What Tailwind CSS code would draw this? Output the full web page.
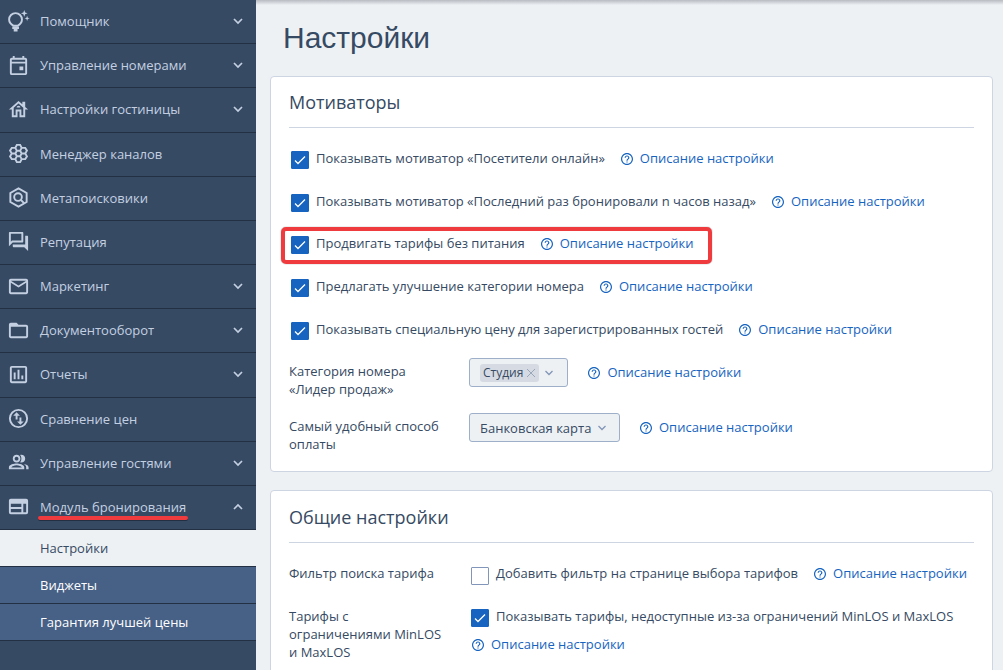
<!DOCTYPE html>
<html lang="ru">
<head>
    <meta charset="UTF-8">
    <meta name="viewport" content="width=device-width, initial-scale=1.0">
    <script src="https://cdn.jsdelivr.net/npm/@tailwindcss/browser@4"></script>
    <title>Настройки</title>
</head>
<body class="bg-[#edf1f4] font-['Open_Sans',sans-serif] text-[13px] leading-[18px] text-[#364a63]">

  <!-- Shared icons -->
  <svg class="hidden">
    <symbol id="down" viewBox="0 0 12 12"><path d="M2 4l4 4 4-4" fill="none" stroke="currentColor" stroke-width="1.700"/></symbol>
    <symbol id="thin" viewBox="0 0 12 12"><path d="M2.500 4l3.500 3.500 3.500-3.500" fill="none" stroke="currentColor" stroke-width="1.300"/></symbol>
    <symbol id="check" viewBox="0 0 18 18"><path d="M4 9.500l3 3 7-7" fill="none" stroke="currentColor" stroke-width="1.300"/></symbol>
    <symbol id="help" viewBox="2 2 20 20"><path fill="currentColor" d="M11 18h2v-2h-2v2zm1-16C6.480 2 2 6.480 2 12s4.480 10 10 10 10-4.480 10-10S17.520 2 12 2zm0 18c-4.410 0-8-3.590-8-8s3.590-8 8-8 8 3.590 8 8-3.590 8-8 8zm0-14c-2.210 0-4 1.790-4 4h2c0-1.100.9-2 2-2s2 .9 2 2c0 2-3 1.750-3 5h2c0-2.250 3-2.500 3-5 0-2.210-1.790-4-4-4z"/></symbol>
  </svg>

  <div class="flex h-screen overflow-hidden">

    <!-- Sidebar -->
    <nav class="w-64 shrink-0 overflow-hidden bg-[#364a63] text-[#c4d0e2]">
      <div class="grid h-[530px] auto-rows-fr">
        <a href="#" class="flex items-center gap-[10px] border-b border-[#233044] pb-px pl-[7px] pr-3">
          <svg class="size-[23px]" viewBox="0 0 24 24" fill="none" stroke="currentColor" stroke-width="2"><path d="M7 16.500C4 15 2.200 12.800 2.200 10a6.700 6.700 0 0113.400 0c0 2.800-1.600 5-4.600 6.500z"/><path d="M5.500 18.500h7M7 21.200h4" stroke-width="2.500"/><path d="M18 0l.9 2.600 2.600.9-2.600.9L18 7l-.9-2.600-2.600-.9 2.600-.9zM21 6l.7 2 2 .7-2 .7-.7 2-.7-2-2-.7 2-.7z" fill="currentColor" stroke="none"/></svg>
          <span class="flex-1">Помощник</span>
          <svg class="size-3"><use href="#down"/></svg>
        </a>
        <a href="#" class="flex items-center gap-[10px] border-b border-[#233044] pb-px pl-[7px] pr-3">
          <svg class="size-[23px]" viewBox="0 0 24 24" fill="currentColor"><path d="M19 4h-1V2h-2v2H8V2H6v2H5c-1.100 0-2 .9-2 2v14a2 2 0 002 2h14c1.100 0 2-.9 2-2V6c0-1.100-.9-2-2-2zm0 16H5V10h14v10zM5 8V6h14v2H5zm8 5h4v4h-4z"/></svg>
          <span class="flex-1">Управление номерами</span>
          <svg class="size-3"><use href="#down"/></svg>
        </a>
        <a href="#" class="flex items-center gap-[10px] border-b border-[#233044] pb-px pl-[7px] pr-3">
          <svg class="size-[23px]" viewBox="0 0 24 24" fill="currentColor"><path d="M19 9.300V4h-3v2.600L12 3 2 12h3v8h6v-6h2v6h6v-8h3l-3-2.700zM17 18h-2v-6H9v6H7v-7.810l5-4.500 5 4.500V18z"/><path d="M10 10h4c0-1.100-.9-2-2-2s-2 .9-2 2z"/></svg>
          <span class="flex-1">Настройки гостиницы</span>
          <svg class="size-3"><use href="#down"/></svg>
        </a>
        <a href="#" class="flex items-center gap-[10px] border-b border-[#233044] pb-px pl-[7px] pr-3">
          <svg class="size-[23px]" viewBox="0 0 24 24" fill="none" stroke="currentColor" stroke-width="2"><path d="M10.300 9.200h3.400l1.600 2.800-1.600 2.800h-3.400L8.700 12zM10.300 3h3.400l1.600 3.100-1.600 3.100h-3.400L8.700 6.100zM10.300 14.800h3.400l1.600 3.100-1.600 3.100h-3.400l-1.600-3.100zM8.700 6.100H5L3.200 9 5 12h3.700M8.700 12H5l-1.800 3L5 17.900h3.700M15.300 6.100H19L20.800 9 19 12h-3.700M15.300 12H19l1.800 3-1.800 2.900h-3.700"/></svg>
          <span class="flex-1">Менеджер каналов</span>
        </a>
        <a href="#" class="flex items-center gap-[10px] border-b border-[#233044] pb-px pl-[7px] pr-3">
          <svg class="size-[23px]" viewBox="0 0 24 24" fill="none" stroke="currentColor" stroke-width="2"><path d="M12 2.500l8.500 4.800v9.400L12 21.500l-8.500-4.800V7.300z"/><circle cx="11.500" cy="11.500" r="4"/><path d="M14.300 14.300l3.500 3.500"/></svg>
          <span class="flex-1">Метапоисковики</span>
        </a>
        <a href="#" class="flex items-center gap-[10px] border-b border-[#233044] pb-px pl-[7px] pr-3">
          <svg class="size-[23px]" viewBox="0 0 24 24" fill="currentColor"><path d="M15 4v7H5.170L4 12.170V4h11m1-2H3c-.55 0-1 .45-1 1v14l4-4h10c.55 0 1-.45 1-1V3c0-.55-.45-1-1-1zm5 4h-2v9H6v2c0 .55.45 1 1 1h11l4 4V7c0-.55-.45-1-1-1z"/></svg>
          <span class="flex-1">Репутация</span>
        </a>
        <a href="#" class="flex items-center gap-[10px] border-b border-[#233044] pb-px pl-[7px] pr-3">
          <svg class="size-[23px]" viewBox="0 0 24 24" fill="currentColor"><path d="M22 6c0-1.100-.9-2-2-2H4c-1.100 0-2 .9-2 2v12c0 1.100.9 2 2 2h16c1.100 0 2-.9 2-2V6zm-2 0l-8 5-8-5h16zm0 12H4V8l8 5 8-5v10z"/></svg>
          <span class="flex-1">Маркетинг</span>
          <svg class="size-3"><use href="#down"/></svg>
        </a>
        <a href="#" class="flex items-center gap-[10px] border-b border-[#233044] pb-px pl-[7px] pr-3">
          <svg class="size-[23px]" viewBox="0 0 24 24" fill="currentColor"><path d="M20 6h-8l-2-2H4c-1.100 0-2 .9-2 2v12c0 1.100.9 2 2 2h16c1.100 0 2-.9 2-2V8c0-1.100-.9-2-2-2zm0 12H4V8h16v10z"/></svg>
          <span class="flex-1">Документооборот</span>
          <svg class="size-3"><use href="#down"/></svg>
        </a>
        <a href="#" class="flex items-center gap-[10px] border-b border-[#233044] pb-px pl-[7px] pr-3">
          <svg class="size-[23px]" viewBox="0 0 24 24" fill="currentColor"><path d="M19 3H5c-1.100 0-2 .9-2 2v14c0 1.100.9 2 2 2h14c1.100 0 2-.9 2-2V5c0-1.100-.9-2-2-2zm0 16H5V5h14v14zM7 10h2v7H7zm4-3h2v10h-2zm4 6h2v4h-2z"/></svg>
          <span class="flex-1">Отчеты</span>
          <svg class="size-3"><use href="#down"/></svg>
        </a>
        <a href="#" class="flex items-center gap-[10px] border-b border-[#233044] pb-px pl-[7px] pr-3">
          <svg class="size-[23px]" viewBox="0 0 24 24" fill="currentColor"><path d="M12 2a10 10 0 100 20 10 10 0 000-20zm0 18a8 8 0 110-16 8 8 0 010 16z"/><path d="M6.500 9L10 5.500 13.500 9H11v4H9V9zm11 6L14 18.500 10.500 15H13v-4h2v4z"/></svg>
          <span class="flex-1">Сравнение цен</span>
        </a>
        <a href="#" class="flex items-center gap-[10px] border-b border-[#233044] pb-px pl-[7px] pr-3">
          <svg class="size-[23px]" viewBox="0 0 24 24" fill="currentColor"><path d="M17.500 13.500c1.600.9 2.500 2 2.500 3.500v2h2.500v-2c0-2-2.500-3.100-5-3.500zM15 12c2.210 0 4-1.790 4-4s-1.790-4-4-4c-.47 0-.91.1-1.330.24C14.500 5.270 15 6.580 15 8s-.5 2.730-1.330 3.760c.42.14.86.24 1.330.24zM10 12c2.210 0 4-1.790 4-4s-1.790-4-4-4-4 1.790-4 4 1.790 4 4 4zm0-6c1.100 0 2 .9 2 2s-.9 2-2 2-2-.9-2-2 .9-2 2-2zM10 13c-2.670 0-8 1.100-8 4v2h16v-2c0-2.900-5.330-4-8-4zm5.500 4.200h-11c.8-1.300 3-2.300 5.500-2.300s4.700 1 5.500 2.300z"/></svg>
          <span class="flex-1">Управление гостями</span>
          <svg class="size-3"><use href="#down"/></svg>
        </a>
        <a href="#" class="flex items-center gap-[10px] border-b border-[#233044] pb-px pl-[7px] pr-3">
          <svg class="size-[23px]" viewBox="0 0 24 24" fill="currentColor" fill-rule="evenodd"><path d="M4 4h16a2 2 0 012 2v12a2 2 0 01-2 2H4a2 2 0 01-2-2V6c0-1.100.9-2 2-2zm0 5v3.500h11V9zm0 5.500V18h11v-3.500zM17 9v9h3V9z"/></svg>
          <span class="relative">Модуль бронирования
            <span class="absolute -left-[2px] -right-[2px] top-[18px] h-1 rounded-full bg-[#f03b3e] shadow-[0_1px_0_#233044]"></span>
          </span>
          <svg class="ml-auto size-3 rotate-180"><use href="#down"/></svg>
        </a>
      </div>
      <a href="#" class="flex h-[37px] items-center border-b border-[#233044] bg-[#edf1f4] pb-px pl-10 text-[#364a63]">Настройки</a>
      <a href="#" class="flex h-[37px] items-center border-b border-[#233044] bg-[#476085] pb-px pl-10 font-medium text-white">Виджеты</a>
      <a href="#" class="flex h-[37px] items-center border-b border-[#233044] bg-[#476085] pb-px pl-10 font-medium text-white">Гарантия лучшей цены</a>
    </nav>

    <!-- Content -->
    <main class="min-w-0 flex-1 overflow-hidden bg-linear-to-b from-[#b8bcc2] to-[#edf1f4] to-[5px] pl-[14px] pr-[10px]">
      <h1 class="flex h-[76px] items-center pl-[13px] font-['Liberation_Sans',sans-serif] text-[30px]">Настройки</h1>

      <section class="rounded-sm border border-[#cdd5e3] bg-white px-[18px] pb-[18px]">
        <h2 class="flex h-[51px] items-center border-b border-[#cdd5e3] text-[18px]">Мотиваторы</h2>
        <div class="mt-[9px] grid h-[213px] auto-rows-fr whitespace-nowrap">
          <div class="flex items-center gap-4">
            <label class="flex items-center gap-[7px] pl-[2px]">
              <span class="mt-1 grid size-[18px] text-white">
                <input type="checkbox" checked class="col-start-1 row-start-1 size-[18px] appearance-none rounded-[1px] border border-[#8196b8] bg-white checked:border-[#1764c0] checked:bg-[#1764c0]">
                <svg class="pointer-events-none col-start-1 row-start-1 size-[18px]"><use href="#check"/></svg>
              </span>
              Показывать мотиватор «Посетители онлайн»
            </label>
            <a href="#" class="flex items-center gap-[7px] text-[#1764c0]"><svg class="mt-[2px] size-3"><use href="#help"/></svg>Описание настройки</a>
          </div>
          <div class="flex items-center gap-4">
            <label class="flex items-center gap-[7px] pl-[2px]">
              <span class="mt-1 grid size-[18px] text-white">
                <input type="checkbox" checked class="col-start-1 row-start-1 size-[18px] appearance-none rounded-[1px] border border-[#8196b8] bg-white checked:border-[#1764c0] checked:bg-[#1764c0]">
                <svg class="pointer-events-none col-start-1 row-start-1 size-[18px]"><use href="#check"/></svg>
              </span>
              Показывать мотиватор «Последний раз бронировали n часов назад»
            </label>
            <a href="#" class="flex items-center gap-[7px] text-[#1764c0]"><svg class="mt-[2px] size-3"><use href="#help"/></svg>Описание настройки</a>
          </div>
          <div class="relative flex w-fit items-center gap-4">
            <label class="flex items-center gap-[7px] pl-[2px]">
              <span class="mt-1 grid size-[18px] text-white">
                <input type="checkbox" checked class="col-start-1 row-start-1 size-[18px] appearance-none rounded-[1px] border border-[#8196b8] bg-white checked:border-[#1764c0] checked:bg-[#1764c0]">
                <svg class="pointer-events-none col-start-1 row-start-1 size-[18px]"><use href="#check"/></svg>
              </span>
              Продвигать тарифы без питания
            </label>
            <a href="#" class="flex items-center gap-[7px] text-[#1764c0]"><svg class="mt-[2px] size-3"><use href="#help"/></svg>Описание настройки</a>
            <div class="pointer-events-none absolute -left-2 -right-[18px] bottom-px top-[5px] rounded-[5px] border-4 border-[#f03b3e] shadow-[0_0_1px_#555]"></div>
          </div>
          <div class="flex items-center gap-4">
            <label class="flex items-center gap-[7px] pl-[2px]">
              <span class="mt-1 grid size-[18px] text-white">
                <input type="checkbox" checked class="col-start-1 row-start-1 size-[18px] appearance-none rounded-[1px] border border-[#8196b8] bg-white checked:border-[#1764c0] checked:bg-[#1764c0]">
                <svg class="pointer-events-none col-start-1 row-start-1 size-[18px]"><use href="#check"/></svg>
              </span>
              Предлагать улучшение категории номера
            </label>
            <a href="#" class="flex items-center gap-[7px] text-[#1764c0]"><svg class="mt-[2px] size-3"><use href="#help"/></svg>Описание настройки</a>
          </div>
          <div class="flex items-center gap-4">
            <label class="flex items-center gap-[7px] pl-[2px]">
              <span class="mt-1 grid size-[18px] text-white">
                <input type="checkbox" checked class="col-start-1 row-start-1 size-[18px] appearance-none rounded-[1px] border border-[#8196b8] bg-white checked:border-[#1764c0] checked:bg-[#1764c0]">
                <svg class="pointer-events-none col-start-1 row-start-1 size-[18px]"><use href="#check"/></svg>
              </span>
              Показывать специальную цену для зарегистрированных гостей
            </label>
            <a href="#" class="flex items-center gap-[7px] text-[#1764c0]"><svg class="mt-[2px] size-3"><use href="#help"/></svg>Описание настройки</a>
          </div>
        </div>

        <div class="grid grid-cols-[160px_1fr] gap-x-5 gap-y-[15px] pt-2">
          <span id="category" class="pt-1">Категория номера «Лидер продаж»</span>
          <div class="flex items-start gap-5">
            <div role="group" aria-labelledby="category" class="flex h-[29px] items-center rounded-[3px] border border-[#9dafc9] bg-[#edf1f4] pl-[10px] pr-3">
              <span class="flex h-[18px] items-center gap-[3px] rounded-[3px] bg-[#d6dbe3] px-[3px] text-[12px]">Студия
                <button type="button" aria-label="Удалить" class="text-[#9aa7ba]"><svg class="size-[10px]" viewBox="0 0 10 10"><path d="M1 1l8 8M9 1L1 9" stroke="currentColor"/></svg></button>
              </span>
              <button type="button" aria-label="Открыть" class="ml-1 text-[#8196b8]"><svg class="size-3"><use href="#thin"/></svg></button>
            </div>
            <a href="#" class="flex h-[27px] items-center gap-[7px] text-[#1764c0]"><svg class="mt-[2px] size-3"><use href="#help"/></svg>Описание настройки</a>
          </div>

          <label for="payment" class="pt-1">Самый удобный способ оплаты</label>
          <div class="flex items-start gap-5">
            <div class="grid items-center">
              <select id="payment" class="col-start-1 row-start-1 h-[29px] appearance-none rounded-[3px] border border-[#9dafc9] bg-[#edf1f4] pl-[10px] pr-[27px]">
                <option>Банковская карта</option>
              </select>
              <svg class="pointer-events-none col-start-1 row-start-1 mr-3 size-3 justify-self-end text-[#8196b8]"><use href="#thin"/></svg>
            </div>
            <a href="#" class="flex h-[27px] items-center gap-[7px] text-[#1764c0]"><svg class="mt-[2px] size-3"><use href="#help"/></svg>Описание настройки</a>
          </div>
        </div>
      </section>

      <section class="mt-[18px] rounded-sm border border-[#cdd5e3] bg-white px-[18px] pb-[18px]">
        <h2 class="flex h-[52px] items-center border-b border-[#cdd5e3] text-[18px]">Общие настройки</h2>
        <div class="grid grid-cols-[160px_1fr] gap-x-5 gap-y-[22px] whitespace-nowrap pt-[21px]">
          <span>Фильтр поиска тарифа</span>
          <div class="flex items-start gap-4">
            <label class="flex items-start gap-[7px] pl-[2px]">
              <span class="mt-[3px] grid size-[18px] text-white">
                <input type="checkbox" class="col-start-1 row-start-1 size-[18px] appearance-none rounded-[1px] border border-[#8196b8] bg-white checked:border-[#1764c0] checked:bg-[#1764c0]">
                <svg class="pointer-events-none col-start-1 row-start-1 size-[18px]"><use href="#check"/></svg>
              </span>
              Добавить фильтр на странице выбора тарифов
            </label>
            <a href="#" class="flex items-center gap-[7px] text-[#1764c0]"><svg class="mt-[2px] size-3"><use href="#help"/></svg>Описание настройки</a>
          </div>
          <span class="whitespace-normal">Тарифы с ограничениями MinLOS и MaxLOS</span>
          <div>
            <label class="flex items-start gap-[7px] pl-[2px]">
              <span class="mt-[2px] grid size-[18px] text-white">
                <input type="checkbox" checked class="col-start-1 row-start-1 size-[18px] appearance-none rounded-[1px] border border-[#8196b8] bg-white checked:border-[#1764c0] checked:bg-[#1764c0]">
                <svg class="pointer-events-none col-start-1 row-start-1 size-[18px]"><use href="#check"/></svg>
              </span>
              Показывать тарифы, недоступные из-за ограничений MinLOS и MaxLOS
            </label>
            <a href="#" class="mt-2 flex items-center gap-[7px] pl-[3px] text-[#1764c0]"><svg class="mt-[2px] size-3"><use href="#help"/></svg>Описание настройки</a>
          </div>
        </div>
      </section>
    </main>
  </div>
</body>
</html>
